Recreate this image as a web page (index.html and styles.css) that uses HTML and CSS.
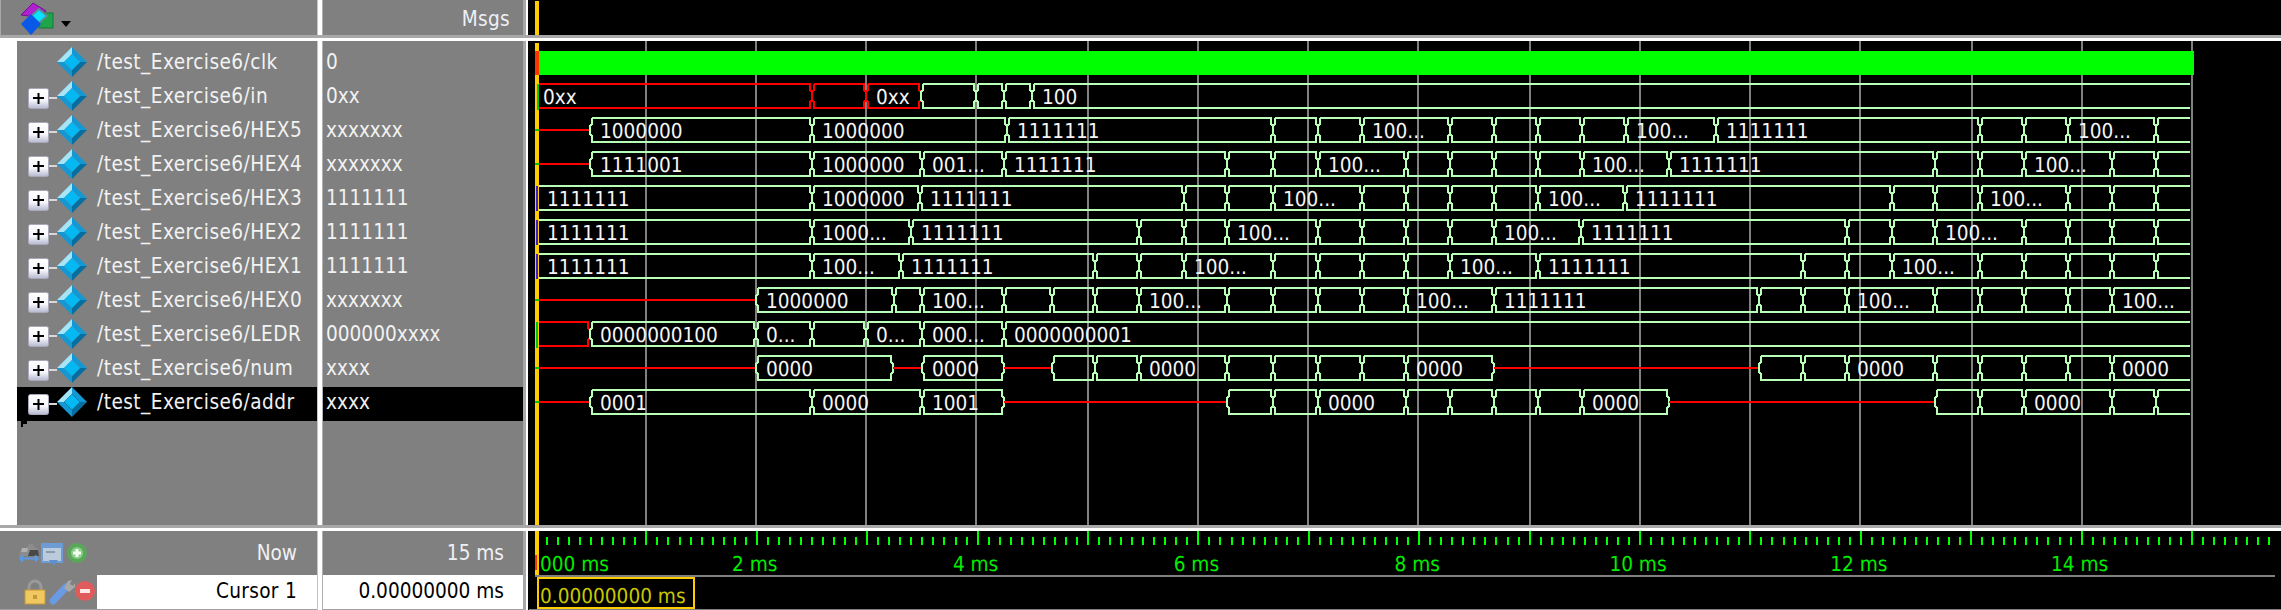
FILE: index.html
```html
<!DOCTYPE html>
<html lang="en">
<head>
<meta charset="utf-8">
<title>Wave</title>
<link rel="stylesheet" href="styles.css">
</head>
<body>
<svg class="defs" aria-hidden="true">
  <symbol id="diamond" viewBox="0 0 30 30">
    <path d="M15 0 0 15 7 15 15 7z" fill="#a6e4f7"/>
    <path d="M15 0 30 15 23 15 15 7z" fill="#1498d4"/>
    <path d="M0 15 15 30 15 23 7 15z" fill="#1498d4"/>
    <path d="M30 15 15 30 15 23 23 15z" fill="#066f9f"/>
    <path d="M15 7 23 15 15 23 7 15z" fill="#04b8f4"/>
  </symbol>
  <linearGradient id="boxfill" x1="0" y1="0" x2="0" y2="1">
    <stop offset="0" stop-color="#fff"/><stop offset=".6" stop-color="#f4f4fa"/><stop offset="1" stop-color="#b4b8d0"/>
  </linearGradient>
  <symbol id="twig" viewBox="0 0 29 30">
    <path d="M20 17h9" stroke="#d8d8d8" stroke-width="2"/>
    <rect x="0.5" y="7.5" width="20" height="20" rx="2" fill="url(#boxfill)" stroke="#a8a8b8"/>
    <path d="M5 17h11M10.500 12v11" stroke="#000" stroke-width="2"/>
  </symbol>
</svg>
<main class="app">
  <div class="head head-names">
    <svg class="wave-logo" viewBox="0 0 60 35" width="60" height="35" aria-hidden="true">
      <path d="M21 15 33 3 46 11 36 17z" fill="#b01fd0" stroke="#70108c"/>
      <rect x="39" y="13" width="14" height="15" fill="#1ea54a" stroke="#157a36"/>
      <path d="M39 9 47 16 39 23 31 16z" fill="#08e4ff" stroke="#5e8c98" stroke-width="2"/>
      <path d="M31 14 41 24 31 35 21 24z" fill="#0a58e8"/>
    </svg>
    <svg class="menu-arrow" viewBox="0 0 10 6" width="10" height="6" aria-hidden="true"><path d="M0 0h10L5 6z"/></svg>
  </div>
  <div class="sash"></div>
  <div class="head head-msgs">Msgs</div>
  <div class="sash sash-wave"></div>
  <div class="head head-wave"><span class="cursor-stub"></span></div>
  <div class="hsash"></div>

  <div class="names">
    <div class="row"><span class="twig-gap"></span><svg class="diamond"><use href="#diamond"/></svg><span class="name">/test_Exercise6/clk</span></div>
    <div class="row"><svg class="twig"><use href="#twig"/></svg><svg class="diamond"><use href="#diamond"/></svg><span class="name">/test_Exercise6/in</span></div>
    <div class="row"><svg class="twig"><use href="#twig"/></svg><svg class="diamond"><use href="#diamond"/></svg><span class="name">/test_Exercise6/HEX5</span></div>
    <div class="row"><svg class="twig"><use href="#twig"/></svg><svg class="diamond"><use href="#diamond"/></svg><span class="name">/test_Exercise6/HEX4</span></div>
    <div class="row"><svg class="twig"><use href="#twig"/></svg><svg class="diamond"><use href="#diamond"/></svg><span class="name">/test_Exercise6/HEX3</span></div>
    <div class="row"><svg class="twig"><use href="#twig"/></svg><svg class="diamond"><use href="#diamond"/></svg><span class="name">/test_Exercise6/HEX2</span></div>
    <div class="row"><svg class="twig"><use href="#twig"/></svg><svg class="diamond"><use href="#diamond"/></svg><span class="name">/test_Exercise6/HEX1</span></div>
    <div class="row"><svg class="twig"><use href="#twig"/></svg><svg class="diamond"><use href="#diamond"/></svg><span class="name">/test_Exercise6/HEX0</span></div>
    <div class="row"><svg class="twig"><use href="#twig"/></svg><svg class="diamond"><use href="#diamond"/></svg><span class="name">/test_Exercise6/LEDR</span></div>
    <div class="row"><svg class="twig"><use href="#twig"/></svg><svg class="diamond"><use href="#diamond"/></svg><span class="name">/test_Exercise6/num</span></div>
    <div class="row selected"><svg class="twig"><use href="#twig"/></svg><svg class="diamond"><use href="#diamond"/></svg><span class="name">/test_Exercise6/addr</span></div>
    <svg class="drop-mark" viewBox="0 0 6 6" width="6" height="6" aria-hidden="true"><path d="M0 0h6v3H2v3H0z"/></svg>
  </div>
  <div class="sash"></div>
  <div class="values">
    <div class="vrow">0</div>
    <div class="vrow">0xx</div>
    <div class="vrow">xxxxxxx</div>
    <div class="vrow">xxxxxxx</div>
    <div class="vrow">1111111</div>
    <div class="vrow">1111111</div>
    <div class="vrow">1111111</div>
    <div class="vrow">xxxxxxx</div>
    <div class="vrow">000000xxxx</div>
    <div class="vrow">xxxx</div>
    <div class="vrow selected">xxxx</div>
  </div>
  <div class="sash sash-wave"></div>
  <div class="plot"><svg id="wave" class="canvas" viewBox="529 41 1752 484" width="1752" height="484" aria-label="Waveforms"></svg></div>
  <div class="hsash"></div>

  <div class="foot foot-names">
    <div class="now-row">
      <svg class="tools" viewBox="0 531 97 44" width="97" height="44" aria-hidden="true">
        <path d="M19 556l3-8 5 0 2-4 4 0 1 3 4 2 1 7z" fill="#8c8c8c"/><path d="M22 548h6l-1 4h-6z" fill="#b0b0b0"/><path d="M30 550l8 0 1 6-11 0z" fill="#484848"/>
        <path d="M20 558.500h18M20 558.500l3-3M20 558.500l3 3M38 558.500l-3-3M38 558.500l-3 3" stroke="#5a9ae8" stroke-width="2" fill="none"/>
        <rect x="41" y="543" width="22" height="20" fill="#6d9bd4"/><rect x="43" y="548" width="18" height="13" fill="#bccbdc"/>
        <rect x="46" y="551" width="9" height="2" fill="#8a9ab0"/><path d="M49 560h9l-4 6z" fill="#5f8fcc"/>
        <circle cx="77" cy="553" r="10" fill="#58a858"/><circle cx="77" cy="553" r="6" fill="#8ccc8c"/>
        <path d="M73 553h8M77 549v8" stroke="#f0fff0" stroke-width="3"/>
      </svg>
      <span class="foot-label">Now</span>
    </div>
    <div class="cursor-row">
      <svg class="tools" viewBox="0 575 97 34" width="97" height="34" aria-hidden="true">
        <path d="M29 590v-3a6 6 0 0 1 12 0v3" fill="none" stroke="#9a9a9a" stroke-width="3"/>
        <rect x="25" y="590" width="20" height="14" fill="#f0c860" stroke="#c8963a"/><rect x="33" y="595" width="4" height="4" fill="#c8963a"/>
        <path d="M53 601 66 587" stroke="#6a9ae4" stroke-width="7" stroke-linecap="round"/>
        <path d="M64 588l4-7 4-1-2 4 3 2 2-3 0 4-6 5z" fill="#a8a8a8"/>
        <circle cx="85" cy="591" r="10" fill="#e05c5c"/><rect x="80" y="589" width="10" height="4" fill="#ffe8e8"/>
      </svg>
      <span class="cursor-name">Cursor 1</span>
    </div>
    <div class="foot-edge"></div>
  </div>
  <div class="sash"></div>
  <div class="foot foot-values">
    <div class="now-val">15 ms</div>
    <div class="cursor-val">0.00000000 ms</div>
    <div class="foot-edge"></div>
  </div>
  <div class="sash sash-wave"></div>
  <div class="timeline"><svg id="time" class="canvas" viewBox="529 531 1752 79" width="1752" height="79" aria-label="Time axis"></svg></div>
</main>
<script src="wave.js"></script>
</body>
</html>
```
FILE: styles.css
```css
html, body { margin: 0; padding: 0; background: #000; }
body { width: 2281px; height: 610px; overflow: hidden; font-family: "DejaVu Sans Condensed", "Liberation Sans", Arial, sans-serif; font-stretch: condensed; }
.defs { position: absolute; width: 0; height: 0; }

.app {
  display: grid;
  grid-template-columns: 317px 6px 200px 6px 1752px;
  grid-template-rows: 35px 6px 484px 6px 79px;
  width: 2281px;
  height: 610px;
}

.sash { background: #fff; border-left: 1px solid #c4c4c4; border-right: 1px solid #b0b0b0; }
.sash-wave { background: #fff; border-left: 3px solid #a8a8a8; border-right: 1px solid #000; }
.hsash { grid-column: 1 / -1; background: #fff; border-top: 3px solid #a8a8a8; }

.head { background: #808080; position: relative; }
.head-names { display: flex; align-items: flex-start; border-left: 1px solid #a8a8a8; }
.wave-logo { display: block; margin-left: -1px; }
.menu-arrow { display: block; margin: 21px 0 0 1px; fill: #000; }
.head-msgs { text-align: right; color: #eef0f6; font-size: 20.600px; line-height: 38px; padding-right: 13px; letter-spacing: .3px; }
.head-wave { background: #000; }
.cursor-stub { position: absolute; left: 6px; top: 1px; width: 4px; height: 34px; background: #ffcc00; }

.names { background: #808080; border-left: 17px solid #fff; padding-top: 6px; box-sizing: border-box; }
.values { background: #808080; padding-top: 6px; }
.row { display: flex; align-items: flex-start; height: 34px; padding-left: 11px; box-sizing: border-box; }
.vrow { height: 34px; padding-left: 3px; color: #f2f2f2; font-size: 20.600px; line-height: 30px; }
.selected { background: #000; }
.twig-gap, .twig { display: block; width: 29px; height: 30px; flex: none; }
.diamond { display: block; width: 30px; height: 30px; flex: none; }
.name { margin-left: 10px; color: #f2f2f2; font-size: 20.600px; letter-spacing: .45px; line-height: 30px; white-space: nowrap; }
.drop-mark { display: block; margin-left: 4px; fill: #000; }

.plot, .timeline { background: #000; }
.canvas { display: block; shape-rendering: crispEdges; }
.canvas text { font-family: "DejaVu Sans Condensed", "Liberation Sans", Arial, sans-serif; font-stretch: condensed; font-size: 20.600px; text-rendering: geometricPrecision; }

.foot { background: #808080; display: flex; flex-direction: column; }
.now-row { display: flex; align-items: center; height: 44px; }
.tools { display: block; flex: none; }
.foot-label { flex: 1; text-align: right; padding-right: 20px; color: #f0f0f4; font-size: 20.600px; }
.cursor-row { display: flex; height: 34px; align-items: stretch; }
.cursor-name { flex: 1; background: #fff; color: #000; text-align: right; padding-right: 20px; font-size: 20.600px; line-height: 33px; letter-spacing: .3px; }
.now-val { height: 44px; line-height: 44px; text-align: right; padding-right: 19px; color: #f0f0f4; font-size: 20.600px; }
.cursor-val { height: 34px; background: #fff; color: #000; text-align: right; padding-right: 19px; font-size: 20.600px; line-height: 33px; }
.foot-edge { height: 1px; background: #a0a0a0; }

.grid-line { stroke: #808080; stroke-width: 2; }
.bus { fill: none; stroke: #b8ffb8; stroke-width: 2; }
.bus-x { fill: none; stroke: #ff0000; stroke-width: 2; }
.line-x { stroke: #ff0000; stroke-width: 2; }
.clk { fill: #00ff00; }
.val { fill: #f6f6f6; }
.cursor { fill: #ffcc00; }
.mark-red { fill: #ff3300; }
.mark-green { fill: #00c800; }
.mark-blue { fill: #4020c0; }
.tick { stroke: #00ff00; stroke-width: 2; }
.tick-label { fill: #00ee00; text-anchor: middle; }
.tick-first { fill: #00ee00; }
.rule { fill: #808080; }
.cursor-box { fill: none; stroke: #ffcc00; stroke-width: 2; }
.cursor-text { fill: #c8c800; }
```
FILE: wave.js
```js
// Waveform data: each stop is [start x, label, kind]; L = unknown line, X = unknown bus.
var END = 2192;
var GRID = [646, 756, 866, 976, 1088, 1198, 1308, 1418, 1530, 1640, 1750, 1860, 1972, 2082, 2192];
var ROWS = [
  null,
  [[538, '0xx', 'X'], [812, '', 'X'], [866, '0xx', 'X'], [921], [976], [1004], [1032, '100']],
  [[538, '', 'L'], [590, '1000000'], [812, '1000000'], [1007, '1111111'], [1273], [1318], [1362, '100...'], [1450], [1494], [1538], [1582], [1626, '100...'], [1716, '1111111'], [1980], [2024], [2068, '100...'], [2156]],
  [[538, '', 'L'], [590, '1111001'], [812, '1000000'], [922, '001...'], [1004, '1111111'], [1227], [1273], [1318, '100...'], [1406], [1450], [1494], [1538], [1582, '100...'], [1669, '1111111'], [1935], [1980], [2024, '100...'], [2112], [2156]],
  [[538, '1111111'], [812, '1000000'], [920, '1111111'], [1184], [1227], [1273, '100...'], [1362], [1406], [1450], [1494], [1538, '100...'], [1625, '1111111'], [1892], [1935], [1980, '100...'], [2068], [2112], [2156]],
  [[538, '1111111'], [812, '1000...'], [911, '1111111'], [1139], [1184], [1227, '100...'], [1318], [1362], [1406], [1450], [1494, '100...'], [1581, '1111111'], [1847], [1892], [1935, '100...'], [2024], [2068], [2112], [2156]],
  [[538, '1111111'], [812, '100...'], [901, '1111111'], [1095], [1139], [1184, '100...'], [1273], [1318], [1362], [1406], [1450, '100...'], [1538, '1111111'], [1803], [1847], [1892, '100...'], [1980], [2024], [2068], [2112], [2156]],
  [[538, '', 'L'], [756, '1000000'], [894], [922, '100...'], [1004], [1052], [1095], [1139, '100...'], [1227], [1273], [1318], [1362], [1406, '100...'], [1494, '1111111'], [1759], [1803], [1847, '100...'], [1935], [1980], [2024], [2068], [2112, '100...']],
  [[538, '', 'X'], [590, '0000000100'], [756, '0...'], [812], [866, '0...'], [922, '000...'], [1004, '0000000001']],
  [[538, '', 'L'], [756, '0000'], [893, '', 'L'], [922, '0000'], [1004, '', 'L'], [1052], [1095], [1139, '0000'], [1227], [1273], [1318], [1362], [1406, '0000'], [1494, '', 'L'], [1759], [1803], [1847, '0000'], [1935], [1980], [2024], [2068], [2112, '0000']],
  [[538, '', 'L'], [590, '0001'], [812, '0000'], [922, '1001'], [1004, '', 'L'], [1227], [1273], [1318, '0000'], [1406], [1450], [1494], [1538], [1582, '0000'], [1669, '', 'L'], [1935], [1980], [2024, '0000'], [2112], [2156]]
];
var NS = 'http://www.w3.org/2000/svg';

function add(parent, tag, attrs, text) {
  var el = document.createElementNS(NS, tag);
  for (var k in attrs) el.setAttribute(k, attrs[k]);
  if (text) el.textContent = text;
  parent.appendChild(el);
  return el;
}

// Outline of one bus value between two transitions; open ends have no bracket.
function cellPath(a, b, top, bot, openLeft, openRight) {
  var d = 'M' + (openLeft ? a : a + 2) + ' ' + top + 'H' + (b - 2);
  if (!openRight) d += 'V' + (top + 6) + 'L' + b + ' ' + (top + 8) + 'V' + (bot - 8) + 'L' + (b - 2) + ' ' + (bot - 6) + 'V' + bot;
  else d += 'M' + (b - 2) + ' ' + bot;
  d += 'H' + (openLeft ? a : a + 2);
  if (!openLeft) d += 'V' + (bot - 6) + 'L' + a + ' ' + (bot - 8) + 'V' + (top + 8) + 'L' + (a + 2) + ' ' + (top + 6) + 'V' + top;
  return d;
}

function labelX(a, label) {
  if (a !== 538) return a + 10;
  return a + (label === '0xx' ? 5 : 9);
}

function drawWave(svg) {
  GRID.forEach(function (x) {
    add(svg, 'line', { 'class': 'grid-line', x1: x, x2: x, y1: 41, y2: 525 });
  });
  add(svg, 'rect', { 'class': 'clk', x: 539, y: 51, width: 1655, height: 24 });
  ROWS.forEach(function (row, i) {
    if (!row) return;
    var top = 50 + 34 * i, bot = top + 24, mid = top + 12;
    row.forEach(function (stop, j) {
      var a = stop[0], label = stop[1], kind = stop[2];
      var next = row[j + 1], b = next ? next[0] : END;
      if (kind === 'L') {
        add(svg, 'line', { 'class': 'line-x', x1: a, x2: b, y1: mid, y2: mid });
        return;
      }
      add(svg, 'path', {
        'class': kind === 'X' ? 'bus-x' : 'bus',
        d: cellPath(a, b, top, bot, a === 538, !next)
      });
      if (label) add(svg, 'text', { 'class': 'val', x: labelX(a, label), y: top + 20 }, label);
    });
  });
  add(svg, 'rect', { 'class': 'cursor', x: 535, y: 43, width: 4, height: 482 });
  add(svg, 'rect', { 'class': 'mark-red', x: 535, y: 51, width: 4, height: 24 });
  add(svg, 'rect', { 'class': 'mark-green', x: 537, y: 84, width: 2, height: 26 });
  add(svg, 'rect', { 'class': 'mark-green', x: 536, y: 322, width: 2, height: 26 });
  [2, 3, 7, 9, 10].forEach(function (i) {
    add(svg, 'rect', { 'class': 'mark-green', x: 535, y: 61 + 34 * i, width: 4, height: 2 });
  });
  [4, 5, 6].forEach(function (i) {
    add(svg, 'rect', { 'class': 'mark-blue', x: 536, y: 50 + 34 * i, width: 2, height: 25 });
  });
}

function drawTime(svg) {
  var ticks = '';
  for (var n = 1; n * 11.04 + 536 < 2272; n++) {
    var x = Math.round(536 + n * 11.04);
    ticks += 'M' + x + ' ' + (n % 10 === 0 ? 531 : 537) + 'V545';
  }
  add(svg, 'path', { 'class': 'tick', d: ticks });
  add(svg, 'text', { 'class': 'tick-first', x: 540, y: 571 }, '000 ms');
  for (var t = 2; t <= 14; t += 2) {
    add(svg, 'text', { 'class': 'tick-label', x: 536 + t * 110.4 - 2, y: 571 }, t + ' ms');
  }
  add(svg, 'rect', { 'class': 'cursor', x: 535, y: 531, width: 4, height: 44 });
  add(svg, 'rect', { 'class': 'mark-red', x: 535, y: 555, width: 2, height: 15 });
  add(svg, 'rect', { 'class': 'rule', x: 535, y: 575, width: 1740, height: 2 });
  add(svg, 'rect', { 'class': 'rule', x: 529, y: 609, width: 1752, height: 1 });
  add(svg, 'rect', { 'class': 'cursor-box', x: 538, y: 578, width: 156, height: 30 });
  add(svg, 'text', { 'class': 'cursor-text', x: 540, y: 603 }, '0.00000000 ms');
}

drawWave(document.getElementById('wave'));
drawTime(document.getElementById('time'));
```
